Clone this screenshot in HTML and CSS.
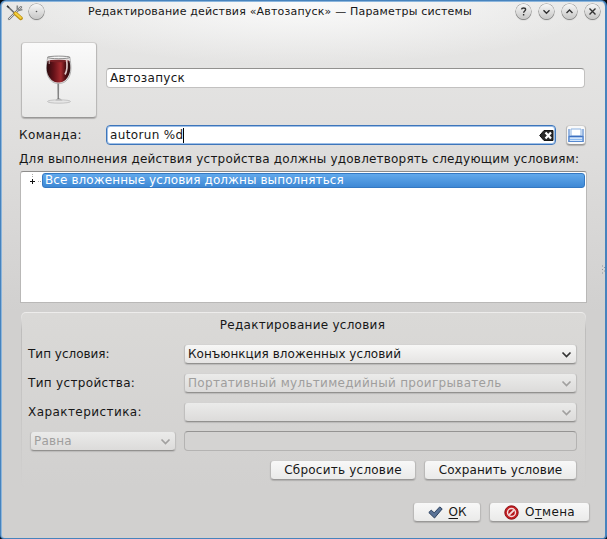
FILE: index.html
```html
<!DOCTYPE html>
<html lang="ru">
<head>
<meta charset="utf-8">
<title>Редактирование действия</title>
<link rel="stylesheet" href="styles.css">
</head>
<body>
<div class="window">
  <header class="titlebar">
    <svg class="app-icon" width="17" height="17" viewBox="0 0 17 17">
      <path d="M15 3.2 3 15" stroke="#77797a" stroke-width="2.4" stroke-linecap="round"/>
      <path d="M15 3.2 3 15" stroke="#dedede" stroke-width="1" stroke-linecap="round"/>
      <path d="M11.3 1.5v3.6l1.8 1.3 3.3-.9" fill="none" stroke="#858888" stroke-width="1.6"/>
      <path d="M1.2 2 8.5 9" stroke="#6b6d6e" stroke-width="1.7"/>
      <path d="m1 1.8 2 2" stroke="#333" stroke-width="1.5"/>
      <path d="m9.5 9.6 5.3 4.6" stroke="#bd8f12" stroke-width="4" stroke-linecap="round"/>
      <path d="m9.5 9.2 5.2 4.6" stroke="#f5d13c" stroke-width="2.2" stroke-linecap="round"/>
    </svg>
    <span class="round pin"><svg width="15" height="15"><circle cx="7.5" cy="7.5" r=".8" fill="#555"/></svg></span>
    <h1 class="title"><span class="t-title">Редактирование действия «Автозапуск» — Параметры системы</span></h1>
    <div class="controls">
      <span class="round"><svg width="15" height="15" class="glyph"><path d="M5.5 5.3C5.7 3.7 9.6 3.5 9.6 5.5 9.6 7 7.6 7 7.6 8.8M7.6 10v1.4"/></svg></span>
      <span class="round"><svg width="15" height="15" class="glyph"><path d="m4.5 6.3 3 3 3-3"/></svg></span>
      <span class="round"><svg width="15" height="15" class="glyph"><path d="m4.5 9 3-3 3 3"/></svg></span>
      <span class="round"><svg width="15" height="15" class="glyph"><path d="m4.5 4.5 6 6m0-6-6 6"/></svg></span>
    </div>
  </header>

  <main class="content">
    <section class="identity">
      <div class="button icon-button">
        <svg width="28" height="50" viewBox="0 0 28 50">
          <defs>
            <linearGradient id="wine"><stop offset="0" stop-color="#2a0b0e"/><stop offset=".3" stop-color="#651219"/><stop offset=".6" stop-color="#a52a2e"/><stop offset=".8" stop-color="#4c0d12"/><stop offset="1" stop-color="#2b1214"/></linearGradient>
          </defs>
          <ellipse cx="14" cy="46.5" rx="11.5" ry="1.7" fill="#e6e6e6" stroke="#b5b5b5" stroke-width=".7"/>
          <path d="M12.3 27h2.8l-.5 16 3 2.500h-7.3l2.600-2.500z" fill="#b6b6b6"/>
          <path d="M13.2 28v16" stroke="#555" stroke-width=".9"/>
          <path d="M14.4 28v15" stroke="#fff" stroke-width=".7"/>
          <path d="M2.7 2C1 12 1 18 4 23c3 5 7 5.500 9.500 5.500s7-.5 10-5.500c3-5 3-11 1.300-21z" fill="#e8e6e6" stroke="#999" stroke-width=".7"/>
          <path d="M2.500 6C1 13 1.500 18 4.500 22.500c2.500 4 6 5 9 5s6.500-1 9-5c3-4.500 3.500-9.500 2-16.500z" fill="url(#wine)"/>
          <ellipse cx="13.700" cy="6" rx="10.800" ry="1.300" fill="#792025"/>
          <ellipse cx="13.700" cy="2.400" rx="11" ry="1.300" fill="#f5f5f5" stroke="#777" stroke-width=".8"/>
          <path d="M21.500 4.500c1 6 .8 11-1.500 15" fill="none" stroke="#dfc7c7" stroke-width="1.700"/>
          <path d="M4.200 5v4" stroke="#c9b5b5" stroke-width="1"/>
        </svg>
      </div>
      <div class="input name-input"><span class="t-name">Автозапуск</span></div>
    </section>

    <section class="command">
      <label class="command-label"><span class="t-cmd">Команда:</span></label>
      <div class="input focused">
        <span class="t-run">autorun %d</span><i class="caret"></i>
        <svg class="clear" width="15" height="11" viewBox="0 0 15 11"><path d="M5 .5h9v10H5L.7 5.500z" fill="#292929" stroke="#111"/><path d="m6.500 2.500 5.500 6m0-6-5.500 6" stroke="#fff" stroke-width="2.200"/></svg>
      </div>
      <div class="button browse">
        <svg width="16" height="15" viewBox="0 0 16 15"><path d="M3 1h10v7H3z" fill="#fff" stroke="#8bb2e2"/><path d="M1 1v12.500h14V1" fill="none" stroke="#5689d0" stroke-width="1.200"/><path d="M1.500 8h13v5h-13z" fill="#d3e6fb"/><path d="M1 8.500h14" stroke="#3d6fc0" stroke-width="1.300"/><path d="M2 11.500h12" stroke="#8dbaf0"/><path d="M1 8v5.500h14V8" fill="none" stroke="#5689d0" stroke-width="1.200"/></svg>
      </div>
    </section>

    <p class="hint"><span class="t-hint">Для выполнения действия устройства должны удовлетворять следующим условиям:</span></p>

    <div class="tree">
      <div class="tree-row">
        <svg class="expander" width="20" height="15"><path d="M8 8.500h5M10.500 6v5" stroke="#111"/><path d="M10.500 1v3M16 8.500h4" stroke="#aaa" stroke-dasharray="1 1"/></svg>
        <div class="selected"><span class="t-tree">Все вложенные условия должны выполняться</span></div>
      </div>
    </div>

    <section class="group">
      <h2 class="group-title"><span class="t-group">Редактирование условия</span></h2>
      <div class="form">
        <label><span class="t-f1">Тип условия:</span></label>
        <div class="combo"><span class="t-c1">Конъюнкция вложенных условий</span><svg width="11" height="7"><path d="m1.500 1.500 4 4 4-4"/></svg></div>
        <label><span class="t-f2">Тип устройства:</span></label>
        <div class="combo off"><span class="t-c2">Портативный мультимедийный проигрыватель</span><svg width="11" height="7"><path d="m1.500 1.500 4 4 4-4"/></svg></div>
        <label><span class="t-f3">Характеристика:</span></label>
        <div class="combo off"><span></span><svg width="11" height="7"><path d="m1.500 1.500 4 4 4-4"/></svg></div>
        <div class="combo off narrow"><span class="t-c3">Равна</span><svg width="11" height="7"><path d="m1.500 1.500 4 4 4-4"/></svg></div>
        <div class="input blank"></div>
      </div>
      <div class="group-actions">
        <div class="button reset"><span class="t-b1">Сбросить условие</span></div>
        <div class="button save"><span class="t-b2">Сохранить условие</span></div>
      </div>
    </section>

    <footer class="actions">
      <div class="button ok">
        <svg width="15" height="13" viewBox="0 0 15 13"><path d="m.8 6.500 2.400-2.300 3 2.600L11.700.900l2.500 2L6.500 12z" fill="#5a7396" stroke="#2c405e"/></svg>
        <span class="t-ok"><u>О</u>К</span>
      </div>
      <div class="button cancel">
        <svg width="15" height="15" viewBox="0 0 15 15"><circle cx="7.500" cy="7.500" r="6.700" fill="#c51e22" stroke="#8f1317"/><circle cx="7.500" cy="7.500" r="4" fill="#b5161a" stroke="#f4dede" stroke-width="1.400"/><path d="m4.800 10.200 5.400-5.400" stroke="#f4dede" stroke-width="1.900"/></svg>
        <span class="t-cancel">О<u>т</u>мена</span>
      </div>
    </footer>
  </main>
  <svg class="grip" width="4" height="9"><path d="M1 1h1M3 2.500h1M1 4.500h1M3 6h1M1 8h1" stroke="#8e959c"/></svg>
</div>
</body>
</html>
```
FILE: styles.css
```css
* { box-sizing: border-box; }
body {
  margin: 0;
  background: #080d14;
  color: #171717;
  font: 12px/16px "DejaVu Sans", sans-serif;
}
h1, h2, p { margin: 0; font: inherit; }
svg { display: block; flex: none; fill: none; }
span { white-space: pre; }

.window {
  position: relative;
  width: 607px;
  height: 539px;
  border: 1px solid #4783bd;
  border-width: 1px 2px 1px 1px;
  border-radius: 6px 6px 4px 4px;
  overflow: hidden;
  background:
    radial-gradient(ellipse 300px 64px at 303px 0, #fbfbfb, rgba(251, 251, 251, 0)),
    linear-gradient(#e8e8e7 0, #e0dfde 130px, #d1d0cf 310px, #d1d0cf 100%);
  box-shadow: inset 0 1px #8bb5dc, inset 1px 0 #8bb5dc;
}

.titlebar { display: flex; height: 22px; padding: 3px 5px 0 5px; }
.app-icon { margin-right: 6px; }
.round {
  width: 15px;
  height: 15px;
  border-radius: 50%;
  background: linear-gradient(#f7f7f7, #c7c7c6);
  box-shadow: 0 0 0 .6px #8c8c8b, 0 1px 1px #777;
}
.glyph { stroke: #333; stroke-width: 1.4; }
.title { flex: 1; padding-left: 44px; font-size: 11px; line-height: 15px; }
.controls { display: flex; gap: 8px; }

/* Per-string tracking */
.t-title { letter-spacing: .185px; }
.t-name { letter-spacing: .3px; }
.t-cmd { letter-spacing: .4px; }
.t-run { letter-spacing: .35px; }
.t-hint { letter-spacing: .205px; }
.t-tree { letter-spacing: .1px; }
.t-group { letter-spacing: .27px; }
.t-f2 { letter-spacing: .33px; }
.t-f3 { letter-spacing: .43px; }
.t-c1 { letter-spacing: .03px; }
.t-c2 { letter-spacing: .3px; }
.t-c3 { letter-spacing: .2px; }
.t-b1 { letter-spacing: .23px; }
.t-b2 { letter-spacing: .07px; }
.t-cancel { letter-spacing: .3px; }

.content { padding: 19px 15px 0 19px; }
.identity { display: flex; align-items: center; height: 76px; padding-left: 1px; }
.button {
  display: flex;
  align-items: center;
  justify-content: center;
  height: 20px;
  border: 1px solid #bab9b8;
  border-top-color: #cfcecd;
  border-bottom-color: #999897;
  border-radius: 4px;
  background: linear-gradient(#f8f8f8, #eaeae9);
  box-shadow: 0 1px 1px #b1b0af;
}
.icon-button { width: 76px; height: 76px; background: linear-gradient(#fafafa, #e8e8e7); }
.input {
  display: flex;
  align-items: center;
  height: 20px;
  padding: 0 3px;
  border: 1px solid #c2c1c0;
  border-top-color: #92918f;
  border-radius: 4px;
  background: #fff;
}
.name-input { width: 479px; margin: -4px 0 0 9px; }

.command { display: flex; height: 20px; margin-top: 7px; }
.command-label { width: 86px; margin-left: -1px; margin-right: 1px; line-height: 20px; }
.focused { width: 450px; border-color: #3d75ba; box-shadow: inset 0 0 0 1px #9fc0e8; }
.caret { width: 1px; height: 15px; background: #000; }
.clear { margin-left: auto; margin-right: -2px; }
.browse { width: 20px; margin-left: 10px; background: #f9f9f9; }

.hint { height: 26px; padding-top: 6px; margin-left: -1px; margin-right: 1px; }

.tree {
  width: 567px;
  height: 132px;
  padding: 1px;
  border: 1px solid #b9b8b7;
  border-top-color: #8e8d8c;
  border-radius: 3px 3px 0 0;
  background: #fff;
}
.tree-row { display: flex; }
.selected {
  width: 543px;
  height: 15px;
  padding-left: 2px;
  border: 1px solid #3478c2;
  border-radius: 3px;
  background: linear-gradient(#62a9eb, #3e88d5);
  color: #fff;
  line-height: 13px;
}

.group {
  width: 565px;
  height: 176px;
  margin: 9px 0 0 1px;
  padding: 4px 9px 0 6px;
  border: 1px solid transparent;
  border-radius: 5px;
  background: linear-gradient(#dad9d7, #d1d0cf) padding-box, linear-gradient(#efeeed, #bebdbc 10%, #d1d0cf) border-box;
}
.group-title { height: 27px; padding-left: 1px; text-align: center; }
.form {
  display: grid;
  grid-template-columns: 156px 393px;
  grid-auto-rows: 20px;
  row-gap: 9px;
  line-height: 20px;
}
.combo {
  display: flex;
  align-items: center;
  justify-content: space-between;
  height: 20px;
  padding: 0 4px 0 3px;
  border: 1px solid #c0bfbe;
  border-top-color: #d4d3d2;
  border-bottom-color: #92918f;
  border-radius: 4px;
  background: linear-gradient(#f7f7f6, #e5e4e3);
  box-shadow: 0 1px 1px #bbbab9;
}
.combo svg { stroke: #333; stroke-width: 1.7; }
.off { color: #9f9e9d; background: linear-gradient(#ebebea, #dcdbda); }
.off svg { stroke: #a1a09f; }
.narrow { width: 146px; margin-left: 2px; }
.blank { background: #d4d3d2; border-color: #b4b3b2; border-top-color: #959493; }
.group-actions { display: flex; justify-content: flex-end; gap: 8px; margin: 9px -1px 0 0; }
.reset { width: 146px; }
.save { width: 153px; }

.actions { display: flex; gap: 8px; margin: 14px 0 0 393px; }
.ok { width: 68px; gap: 6px; }
.cancel { width: 101px; gap: 6px; }
u { text-underline-offset: 2px; }

.grip { position: absolute; right: 0; top: 264px; }
```
